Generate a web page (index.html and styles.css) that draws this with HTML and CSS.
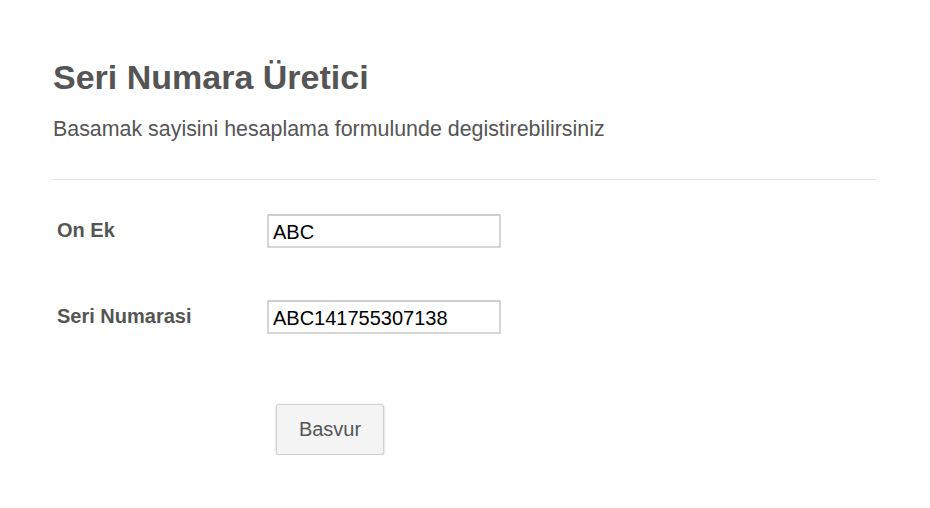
FILE: index.html
```html
<!DOCTYPE html>
<html lang="tr">
<head>
    <meta charset="UTF-8">
    <meta name="viewport" content="width=device-width, initial-scale=1.0">
    <title>Seri Numara Üretici</title>
    <link rel="stylesheet" href="styles.css">
</head>
<body>
    <div class="container">
        <h1>Seri Numara Üretici</h1>
        <p class="subtitle">Basamak sayisini hesaplama formulunde degistirebilirsiniz</p>
        <hr class="divider">
        <form class="form" id="serial-form">
            <div class="form-row">
                <label for="prefix">On Ek</label>
                <input type="text" id="prefix" value="ABC">
            </div>
            <div class="form-row">
                <label for="serial">Seri Numarasi</label>
                <input type="text" id="serial" value="ABC141755307138">
            </div>
            <div class="form-actions">
                <button type="submit" id="apply">Basvur</button>
            </div>
        </form>
    </div>

    <script>
        const form = document.getElementById('serial-form');
        const prefixInput = document.getElementById('prefix');
        const serialInput = document.getElementById('serial');

        function generateSerial() {
            const digits = String(Math.floor(Math.random() * 1e12)).padStart(12, '0');
            serialInput.value = prefixInput.value + digits;
        }

        form.addEventListener('submit', (e) => {
            e.preventDefault();
            generateSerial();
        });
    </script>
</body>
</html>
```

FILE: styles.css
```css
body {
    font-family: "Liberation Sans", Arial, sans-serif;
    margin: 0;
    background-color: #fff;
    color: #555;
}
.container {
    padding: 58px 54px 0 53px;
}
h1 {
    font-size: 34px;
    line-height: 39px;
    margin: 0;
    color: #555;
}
.subtitle {
    font-size: 21.4px;
    line-height: 25px;
    margin: 20px 0 0;
}
.divider {
    border: none;
    border-top: 1px solid #e2e2e2;
    margin: 37px 0 0;
}
.form {
    margin-top: 34px;
}
.form-row {
    display: flex;
    align-items: flex-start;
    margin-bottom: 52px;
}
.form-row label {
    width: 210px;
    padding: 5px 0 0 4px;
    font-size: 20px;
    line-height: 23px;
    font-weight: bold;
    color: #555;
}
.form-row input {
    box-sizing: border-box;
    width: 234px;
    height: 34px;
    padding: 3px 4px 0;
    border: 2px solid #d6d6d6;
    border-top-color: #cfcfcf;
    font-family: "Liberation Sans", Arial, sans-serif;
    font-size: 20px;
    color: #000;
    background: #fff;
}
.form-actions {
    padding: 18px 0 0 223px;
}
button {
    box-sizing: border-box;
    width: 108px;
    height: 51px;
    background: #f4f4f4;
    color: #555;
    border: 1px solid #d0d0d0;
    border-radius: 3px;
    box-shadow: 0 1px 3px rgba(0,0,0,0.2);
    font-family: "Liberation Sans", Arial, sans-serif;
    font-size: 20px;
    cursor: pointer;
}
button:hover {
    background: #ececec;
}
```
